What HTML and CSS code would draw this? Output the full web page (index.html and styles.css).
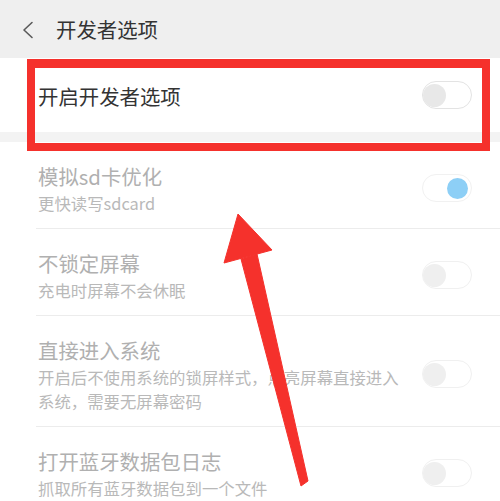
FILE: index.html
```html
<!DOCTYPE html>
<html lang="zh-CN">
<head>
<meta charset="utf-8">
<title>开发者选项</title>
<link rel="stylesheet" href="styles.css">
</head>
<body>
<div class="page">
  <header class="header">
    <svg class="back" width="12" height="18" viewBox="0 0 12 18"><path d="M10 1.5 L2 9 L10 16.5" fill="none" stroke="#5a5a5a" stroke-width="1.6" stroke-linecap="round" stroke-linejoin="round"/></svg>
    <div class="header-title">开发者选项</div>
  </header>

  <section class="master">
    <div class="master-label">开启开发者选项</div>
    <div class="toggle off"><span class="knob"></span></div>
  </section>
  <div class="gap"></div>

  <section class="list">
    <div class="row">
      <div class="text">
        <div class="title">模拟sd卡优化</div>
        <div class="sub">更快读写sdcard</div>
      </div>
      <div class="toggle on"><span class="knob"></span></div>
    </div>
    <div class="row">
      <div class="text">
        <div class="title">不锁定屏幕</div>
        <div class="sub">充电时屏幕不会休眠</div>
      </div>
      <div class="toggle off dim"><span class="knob"></span></div>
    </div>
    <div class="row">
      <div class="text">
        <div class="title">直接进入系统</div>
        <div class="sub">开启后不使用系统的锁屏样式，点亮屏幕直接进入系统，需要无屏幕密码</div>
      </div>
      <div class="toggle off dim"><span class="knob"></span></div>
    </div>
    <div class="row">
      <div class="text">
        <div class="title">打开蓝牙数据包日志</div>
        <div class="sub">抓取所有蓝牙数据包到一个文件</div>
      </div>
      <div class="toggle off dim"><span class="knob"></span></div>
    </div>
  </section>

  <div class="highlight"></div>
  <svg class="arrow" width="500" height="501" viewBox="0 0 500 501">
    <polygon points="238,214 224,263 272,250" fill="#f5312c" stroke="#f5312c" stroke-width="1" stroke-linejoin="round"/>
    <polygon points="241,259 257,254 308,481 301,486" fill="#f5312c" stroke="#f5312c" stroke-width="1" stroke-linejoin="round"/>
  </svg>
</div>
</body>
</html>
```

FILE: styles.css
```css
html, body {
  margin: 0;
  padding: 0;
  background: #ffffff;
}
body {
  font-family: "Noto Sans CJK SC", "Noto Sans", sans-serif;
  overflow: hidden;
  width: 500px;
  height: 501px;
}
.page {
  position: relative;
  width: 500px;
  height: 501px;
  overflow: hidden;
}
.header {
  height: 58px;
  background: #efefef;
  display: flex;
  align-items: center;
}
.back {
  margin-left: 22px;
  margin-top: 1px;
}
.header-title {
  margin-left: 22px;
  font-size: 20.4px;
  color: #333333;
  line-height: 30px;
}
.master {
  height: 74px;
  background: #ffffff;
  display: flex;
  align-items: center;
  justify-content: space-between;
  padding: 0 28px 0 38px;
}
.master-label {
  font-size: 20.4px;
  color: #333333;
  line-height: 30px;
  margin-top: 2px;
}
.gap {
  height: 10px;
  background: #f3f3f3;
}
.list {
  background: #ffffff;
}
.row {
  margin-left: 36px;
  padding: 19px 28px 13px 2px;
  border-bottom: 1px solid #ececec;
  display: flex;
  align-items: center;
  justify-content: space-between;
}
.text {
  width: 366px;
}
.title {
  font-size: 20.4px;
  line-height: 30px;
  color: #b0b0b0;
}
.sub {
  font-size: 16.4px;
  line-height: 24px;
  color: #b9b9b9;
}
.toggle {
  box-sizing: border-box;
  width: 50px;
  height: 28px;
  border-radius: 14px;
  border: 1px solid #e3e3e3;
  background: #ffffff;
  display: flex;
  align-items: center;
  flex-shrink: 0;
}
.toggle.off {
  justify-content: flex-start;
  padding-left: 0;
}
.toggle.off .knob {
  width: 23px;
  height: 23px;
  border-radius: 50%;
  background: #e8e8e8;
}
.toggle.dim {
  border-color: #f0f0f0;
}
.toggle.dim .knob {
  background: #efefef;
}
.toggle.on {
  justify-content: flex-end;
  padding-right: 3px;
  border-color: #f1f1f1;
}
.toggle.on .knob {
  width: 21px;
  height: 21px;
  border-radius: 50%;
  background: #8dcff6;
}
.highlight {
  position: absolute;
  left: 27px;
  top: 59px;
  width: 463px;
  height: 92px;
  box-sizing: border-box;
  border: 8px solid #f5312c;
  border-top-width: 9px;
}
.arrow {
  position: absolute;
  left: 0;
  top: 0;
}
```
